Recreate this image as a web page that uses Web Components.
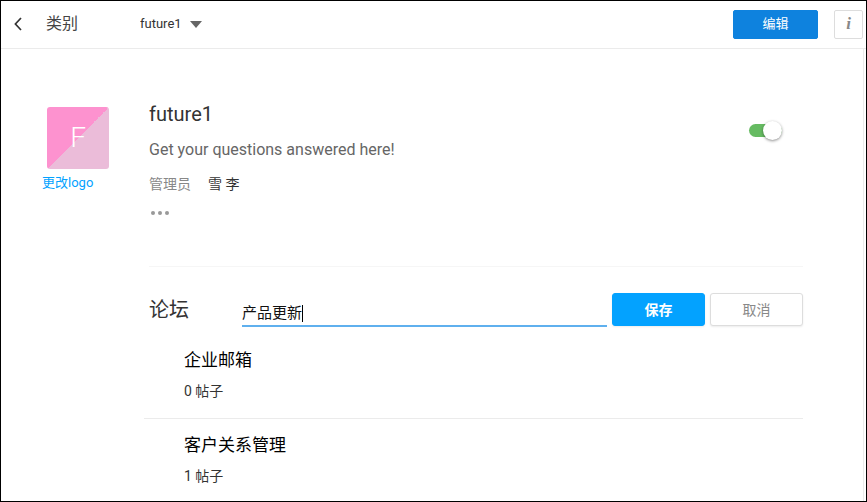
<!DOCTYPE html>
<html lang="zh-CN">
<head>
<meta charset="utf-8">
<meta name="viewport" content="width=device-width, initial-scale=1">
<title>类别</title>
<style>
    html {
        --ui-font: Roboto, "Noto Sans CJK SC", sans-serif;
        --line: #ebebeb;
        --text: #333;
        --muted: #888;
        --accent: #03a2ff;
        font-family: var(--ui-font);
        color: var(--text);
    }
    body { margin: 0; }
</style>
</head>
<body>

<category-page>
    <top-bar slot="bar" heading="类别" category="future1"></top-bar>
    <category-profile name="future1" letter="F">
        <span slot="about">Get your questions answered here!</span>
        <span slot="moderator">雪 李</span>
    </category-profile>
    <forum-section heading="论坛" value="产品更新">
        <forum-item count="0">企业邮箱</forum-item>
        <forum-item count="1">客户关系管理</forum-item>
    </forum-section>
</category-page>

<script>
/* || Helpers */

function makeTemplate(html) {
    const template = document.createElement("template");
    template.innerHTML = html;
    return template;
}

class BaseElement extends HTMLElement {
    constructor(template) {
        super();
        this.attachShadow( {mode: 'open'} );
        this.shadowRoot.appendChild(template.content.cloneNode(true));
    }

    $(selector) { return this.shadowRoot.querySelector(selector) }
}


/* || Page frame */
const CategoryPageTemplate = makeTemplate(`
    <style>
        :host {
            display: flex;
            flex-direction: column;
            box-sizing: border-box;
            min-height: 100vh;
            border: 1px solid #000;
            background: #fff;
        }
        main {
            flex: 1;
            margin-right: 2px;
            padding: 53px 60px 12px 40px;
            border-right: 1px solid var(--line);
        }
    </style>
    <slot name="bar"></slot>
    <main><slot></slot></main>
`);

class CategoryPage extends BaseElement {
    constructor() { super(CategoryPageTemplate) }
}


/* || Button */
const UiButtonTemplate = makeTemplate(`
    <style>
        :host { display: inline-block; }
        button {
            display: block;
            box-sizing: border-box;
            width: 93px;
            height: 33px;
            padding: 0;
            border: 1px solid #ddd;
            border-radius: 3px;
            background: #fff;
            box-shadow: 0 1px 2px rgba(0, 0, 0, 0.08);
            color: var(--muted);
            font: 400 14px/20px var(--ui-font);
            cursor: pointer;
        }
        :host([kind=save]) button {
            border-color: var(--accent);
            background: var(--accent);
            color: #fff;
            font-weight: 700;
        }
        :host([kind=edit]) button {
            width: 85px;
            height: 29px;
            border-color: #0e82de;
            border-radius: 2px;
            background: #0e82de;
            box-shadow: none;
            color: #fff;
            font-size: 13px;
        }
        :host([kind=info]) button {
            width: 29px;
            height: 29px;
            border-radius: 2px;
            box-shadow: none;
            font: italic 700 17px/20px "Liberation Serif", serif;
        }
    </style>
    <button type="button"><slot></slot></button>
`);

class UiButton extends BaseElement {
    constructor() { super(UiButtonTemplate) }
}


/* || Top bar */
const TopBarTemplate = makeTemplate(`
    <style>
        :host {
            display: flex;
            align-items: center;
            height: 46px;
            padding: 0 3px 1px 11px;
            border-bottom: 1px solid var(--line);
        }
        a {
            display: flex;
            padding: 2px;
            color: var(--text);
        }
        h1 {
            margin: 0 0 0 22px;
            font-size: 16px;
            line-height: 24px;
            font-weight: 400;
            color: #444;
        }
        label {
            display: flex;
            align-items: center;
            gap: 8px;
            margin-left: 62px;
        }
        select {
            appearance: none;
            field-sizing: content;
            padding: 0;
            border: 0;
            background: none;
            color: var(--text);
            font: 13px/20px var(--ui-font);
        }
        ui-button[kind=edit] { margin: 0 16px 0 auto; }
    </style>
    <a href="#" aria-label="返回">
        <svg width="8" height="14" viewBox="0 0 8 14" fill="none" stroke="currentColor" stroke-width="1.7"><path d="M7 1 1.4 7 7 13"/></svg>
    </a>
    <h1></h1>
    <label>
        <select aria-label="类别"><option></option></select>
        <svg width="12" height="7" viewBox="0 0 12 7" fill="#666"><path d="M0 0h12L6 7z"/></svg>
    </label>
    <ui-button kind="edit">编辑</ui-button>
    <ui-button kind="info">i</ui-button>
`);

class TopBar extends BaseElement {
    constructor() { super(TopBarTemplate) }

    connectedCallback() {
        this.$("h1").textContent = this.getAttribute("heading");
        this.$("option").textContent = this.getAttribute("category");
    }
}


/* || Toggle switch */
const ToggleSwitchTemplate = makeTemplate(`
    <style>
        :host { display: block; }
        label {
            display: flex;
            align-items: center;
            width: 33px;
            height: 20px;
            cursor: pointer;
        }
        input {
            appearance: none;
            display: flex;
            align-items: center;
            width: 33px;
            height: 13px;
            margin: 0;
            border-radius: 7px;
            background: #ccc;
        }
        input:checked { background: #66bb62; }
        input::before {
            content: "";
            flex: none;
            width: 19px;
            height: 19px;
            border-radius: 50%;
            background: #fff;
            box-shadow: 0 1px 3px rgba(0, 0, 0, 0.45);
        }
        input:checked::before { margin-left: auto; }
    </style>
    <label><input type="checkbox" role="switch" aria-label="启用" checked></label>
`);

class ToggleSwitch extends BaseElement {
    constructor() { super(ToggleSwitchTemplate) }
}


/* || Category profile */
const CategoryProfileTemplate = makeTemplate(`
    <style>
        :host {
            display: flex;
            align-items: flex-start;
            padding-bottom: 43px;
        }
        .logo {
            width: 108px;
            padding-top: 5px;
        }
        .tile {
            display: grid;
            place-items: center;
            width: 62px;
            height: 62px;
            margin-left: 6px;
            border-radius: 3px;
            background: linear-gradient(135deg, #fd92cf 50%, #ebbcd9 50%);
            color: #fff;
            font-size: 28px;
            font-weight: 300;
            line-height: 32px;
        }
        a {
            display: inline-block;
            margin: 4px 0 0 1px;
            color: var(--accent);
            font-size: 13px;
            line-height: 20px;
            text-decoration: none;
        }
        .info { flex: 1; }
        h2 {
            margin: 0;
            font-size: 20px;
            font-weight: 400;
            line-height: 24px;
        }
        p {
            margin: 14px 0 12px;
            color: #666;
            font-size: 16px;
            line-height: 20px;
        }
        dl {
            display: flex;
            gap: 17px;
            margin: 0;
            font-size: 14px;
            line-height: 24px;
        }
        dt { color: var(--muted); }
        dd { margin: 0; }
        button {
            display: flex;
            margin: 7px 0 0;
            padding: 8px 2px;
            border: 0;
            background: none;
        }
        toggle-switch { margin: 18px 21px 0 0; }
    </style>
    <div class="logo">
        <div class="tile"></div>
        <a href="#">更改logo</a>
    </div>
    <div class="info">
        <h2></h2>
        <p><slot name="about"></slot></p>
        <dl>
            <dt>管理员</dt>
            <dd><slot name="moderator"></slot></dd>
        </dl>
        <button type="button" aria-label="更多">
            <svg width="18" height="4" viewBox="0 0 18 4" fill="#999"><circle cx="2" cy="2" r="2"/><circle cx="9" cy="2" r="2"/><circle cx="16" cy="2" r="2"/></svg>
        </button>
    </div>
    <toggle-switch></toggle-switch>
`);

class CategoryProfile extends BaseElement {
    constructor() { super(CategoryProfileTemplate) }

    connectedCallback() {
        this.$("h2").textContent = this.getAttribute("name");
        this.$(".tile").textContent = this.getAttribute("letter");
    }
}


/* || Forum section */
const ForumSectionTemplate = makeTemplate(`
    <style>
        :host {
            display: block;
            margin-left: 108px;
            border-top: 1px solid #f6f6f6;
        }
        form {
            display: flex;
            align-items: flex-start;
            gap: 5px;
            padding: 26px 0 13px;
        }
        h3 {
            width: 88px;
            margin: 0;
            font-size: 20px;
            font-weight: 400;
            line-height: 34px;
        }
        .field {
            display: flex;
            flex: 1;
            align-items: center;
            align-self: flex-end;
            padding-bottom: 2px;
            border-bottom: 2px solid #5fb0ee;
            cursor: text;
        }
        input {
            field-sizing: content;
            padding: 0;
            border: 0;
            outline: 0;
            background: none;
            color: #111;
            caret-color: transparent;
            font: 15px/20px var(--ui-font);
        }
        .caret {
            width: 1px;
            height: 17px;
            background: #000;
        }
        .list { margin-left: -5px; }
    </style>
    <form>
        <h3></h3>
        <label class="field">
            <input type="text" aria-label="论坛名称">
            <span class="caret"></span>
        </label>
        <ui-button kind="save">保存</ui-button>
        <ui-button>取消</ui-button>
    </form>
    <div class="list"><slot></slot></div>
`);

class ForumSection extends BaseElement {
    constructor() { super(ForumSectionTemplate) }

    connectedCallback() {
        this.$("h3").textContent = this.getAttribute("heading");
        this.$("input").value = this.getAttribute("value");
    }
}


/* || Forum list item */
const ForumItemTemplate = makeTemplate(`
    <style>
        :host {
            display: block;
            padding: 8px 0 16px 40px;
            border-bottom: 1px solid var(--line);
        }
        :host(:not(:first-child)) { padding-top: 14px; }
        :host(:last-child) { border-bottom: 0; padding-bottom: 0; }
        h4 {
            margin: 0 0 8px;
            color: #000;
            font-size: 17px;
            font-weight: 400;
            line-height: 24px;
        }
        p {
            margin: 0;
            font-size: 14px;
            line-height: 22px;
        }
    </style>
    <h4><slot></slot></h4>
    <p></p>
`);

class ForumItem extends BaseElement {
    constructor() { super(ForumItemTemplate) }

    connectedCallback() {
        this.$("p").textContent = this.getAttribute("count") + " 帖子";
    }
}


customElements.define("ui-button", UiButton);
customElements.define("toggle-switch", ToggleSwitch);
customElements.define("top-bar", TopBar);
customElements.define("category-profile", CategoryProfile);
customElements.define("forum-item", ForumItem);
customElements.define("forum-section", ForumSection);
customElements.define("category-page", CategoryPage);
</script>
</body>
</html>
